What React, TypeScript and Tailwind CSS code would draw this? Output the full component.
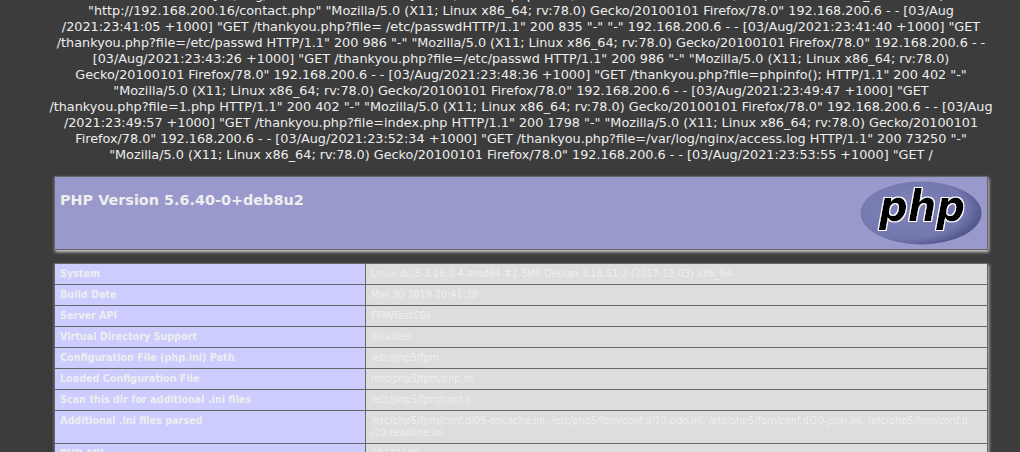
const logLines = [
  '192.168.200.6 - - [03/Aug/2021:23:40:12 +1000] "GET /contact.php HTTP/1.1" 200 835 "-" "Mozilla/5.0 (X11; Linux x86_64; rv:78.0)',
  '"http://192.168.200.16/contact.php" "Mozilla/5.0 (X11; Linux x86_64; rv:78.0) Gecko/20100101 Firefox/78.0" 192.168.200.6 - - [03/Aug',
  '/2021:23:41:05 +1000] "GET /thankyou.php?file= /etc/passwdHTTP/1.1" 200 835 "-" "-" 192.168.200.6 - - [03/Aug/2021:23:41:40 +1000] "GET',
  '/thankyou.php?file=/etc/passwd HTTP/1.1" 200 986 "-" "Mozilla/5.0 (X11; Linux x86_64; rv:78.0) Gecko/20100101 Firefox/78.0" 192.168.200.6 - -',
  '[03/Aug/2021:23:43:26 +1000] "GET /thankyou.php?file=/etc/passwd HTTP/1.1" 200 986 "-" "Mozilla/5.0 (X11; Linux x86_64; rv:78.0)',
  'Gecko/20100101 Firefox/78.0" 192.168.200.6 - - [03/Aug/2021:23:48:36 +1000] "GET /thankyou.php?file=phpinfo(); HTTP/1.1" 200 402 "-"',
  '"Mozilla/5.0 (X11; Linux x86_64; rv:78.0) Gecko/20100101 Firefox/78.0" 192.168.200.6 - - [03/Aug/2021:23:49:47 +1000] "GET',
  '/thankyou.php?file=1.php HTTP/1.1" 200 402 "-" "Mozilla/5.0 (X11; Linux x86_64; rv:78.0) Gecko/20100101 Firefox/78.0" 192.168.200.6 - - [03/Aug',
  '/2021:23:49:57 +1000] "GET /thankyou.php?file=index.php HTTP/1.1" 200 1798 "-" "Mozilla/5.0 (X11; Linux x86_64; rv:78.0) Gecko/20100101',
  'Firefox/78.0" 192.168.200.6 - - [03/Aug/2021:23:52:34 +1000] "GET /thankyou.php?file=/var/log/nginx/access.log HTTP/1.1" 200 73250 "-"',
  '"Mozilla/5.0 (X11; Linux x86_64; rv:78.0) Gecko/20100101 Firefox/78.0" 192.168.200.6 - - [03/Aug/2021:23:53:55 +1000] "GET /',
];

const rows = [
  ['System', ['Linux dc-5 3.16.0-4-amd64 #1 SMP Debian 3.16.51-2 (2017-12-03) x86_64']],
  ['Build Date', ['Mar 30 2019 20:41:38']],
  ['Server API', ['FPM/FastCGI']],
  ['Virtual Directory Support', ['disabled']],
  ['Configuration File (php.ini) Path', ['/etc/php5/fpm']],
  ['Loaded Configuration File', ['/etc/php5/fpm/php.ini']],
  ['Scan this dir for additional .ini files', ['/etc/php5/fpm/conf.d']],
  [
    'Additional .ini files parsed',
    [
      '/etc/php5/fpm/conf.d/05-opcache.ini, /etc/php5/fpm/conf.d/10-pdo.ini, /etc/php5/fpm/conf.d/20-json.ini, /etc/php5/fpm/conf.d',
      '/20-readline.ini',
    ],
  ],
  ['PHP API', ['20131106']],
] as const;

const PhpLogo = () => (
  <svg width="122" height="64" viewBox="0 0 122 64" className="shrink-0">
    <defs>
      <radialGradient id="phpEllipse" cx="38%" cy="42%" r="68%">
        <stop offset="0%" stopColor="#8084b8" />
        <stop offset="72%" stopColor="#7377ae" />
        <stop offset="100%" stopColor="#484b80" />
      </radialGradient>
      <filter id="phpOutline" x="-10%" y="-10%" width="120%" height="120%">
        <feMorphology in="SourceAlpha" operator="dilate" radius="0.4" result="thick" />
        <feMorphology in="SourceAlpha" operator="dilate" radius="1.2" result="outer" />
        <feFlood floodColor="#ffffff" />
        <feComposite in2="outer" operator="in" result="white" />
        <feFlood floodColor="#000000" />
        <feComposite in2="thick" operator="in" result="black" />
        <feMerge>
          <feMergeNode in="white" />
          <feMergeNode in="black" />
        </feMerge>
      </filter>
    </defs>
    <ellipse cx="61" cy="32" rx="60.5" ry="31.5" fill="url(#phpEllipse)" />
    <text
      x="19"
      y="40"
      fontFamily="'DejaVu Sans', sans-serif"
      fontSize="43"
      fontWeight="700"
      fontStyle="italic"
      textLength="86"
      lengthAdjust="spacingAndGlyphs"
      fill="#000"
      filter="url(#phpOutline)"
    >
      php
    </text>
  </svg>
);

export default function App() {
  return (
    <div className="h-[452px] overflow-hidden bg-[#3c3c3c] pl-[22px] font-['DejaVu_Sans',sans-serif]">
      <div className="-mt-[13px] text-center text-[12.8px] leading-[16px] text-[#eeeeee]">
        {logLines.map((line, i) => (
          <div key={i} className="whitespace-nowrap">{line}</div>
        ))}
      </div>
      <div className="mx-auto mt-[13px] w-[934px]">
        <div className="flex h-[74px] justify-between border border-[#666666] bg-[#9999cc] pt-[4px] pr-[5px] pl-[5px] shadow-[1px_2px_3px_#cccccc]">
          <h1 className="mt-[11px] text-[14.4px] leading-[17px] font-bold text-[#eeeeee]">PHP Version 5.6.40-0+deb8u2</h1>
          <PhpLogo />
        </div>
        <div className="mt-[13px] border-t border-r border-l border-[#666666] shadow-[1px_2px_3px_#cccccc]">
          {rows.map(([label, value]) => (
            <div key={label} className="flex border-b border-[#666666] text-[9.6px] leading-[12px] text-[#eeeeee]">
              <div className="w-[311px] shrink-0 border-r border-[#666666] bg-[#ccccff] px-[5px] pt-[4px] pb-[4px] font-bold">{label}</div>
              <div className="min-h-[20px] flex-1 bg-[#dddddd] px-[5px] pt-[4px] pb-[4px]">
                {value.map((line) => (
                  <div key={line} className="whitespace-nowrap">{line}</div>
                ))}
              </div>
            </div>
          ))}
        </div>
      </div>
    </div>
  );
}
